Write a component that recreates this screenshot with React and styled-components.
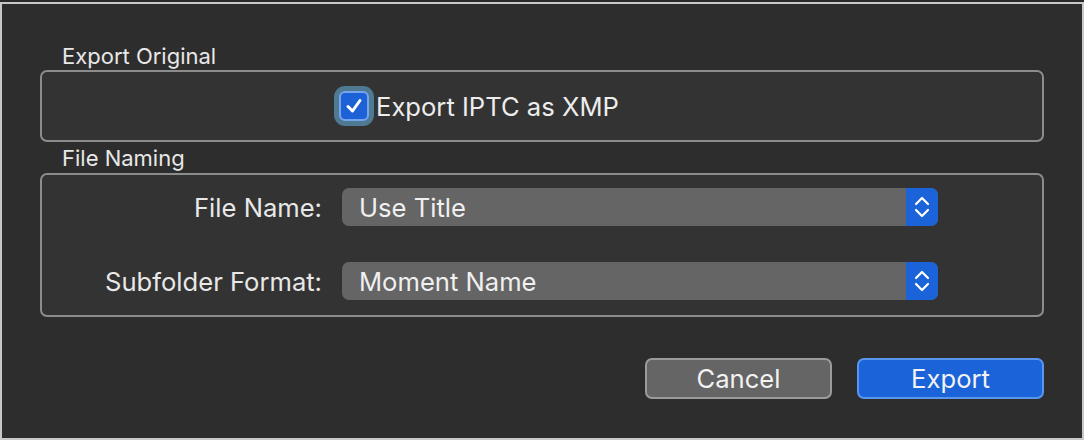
import React from 'react';
import styled, { createGlobalStyle } from 'styled-components';

const GlobalStyle = createGlobalStyle`
  html, body {
    margin: 0;
    padding: 0;
    background: #2a2a2a;
  }
  body {
    font-family: Inter, "Liberation Sans", Arial, sans-serif;
    color: #e4e4e4;
    -webkit-font-smoothing: antialiased;
  }
`

const Window = styled.div`
  box-sizing: border-box;
  margin-top: 2px;
  width: 1084px;
  height: 438px;
  border: 2px solid #c8c8c8;
  background: #2d2d2d;
  padding: 40px 38px 0 38px;
  display: flex;
  flex-direction: column;
`

const GroupLabel = styled.div`
  font-size: 22px;
  line-height: 24px;
  padding-left: 22px;
  margin-bottom: ${p => p.gap}px;
  color: #e8e8e8;
`

const GroupBox = styled.div`
  box-sizing: border-box;
  border: 2px solid #8c8c8c;
  border-radius: 7px;
  background: #333333;
  margin-bottom: ${p => p.after || 0}px;
`

const CheckRow = styled.label`
  display: flex;
  align-items: center;
  height: 68px;
  padding-left: 297px;
  gap: 7px;
  font-size: 25.6px;
  color: #ededed;
`

const CheckBox = styled.span`
  box-sizing: border-box;
  width: 30px;
  height: 30px;
  border-radius: 6px;
  background: #1c62d6;
  border: 2px solid #78a4ec;
  box-shadow: 0 0 0 5px #4e7a94;
  display: flex;
  align-items: center;
  justify-content: center;
`

const FormGrid = styled.div`
  display: grid;
  grid-template-columns: 280px 596px;
  column-gap: 20px;
  row-gap: 36px;
  align-items: center;
  padding: 13px 0 15px 0;
`

const FieldLabel = styled.div`
  text-align: right;
  font-size: 25.6px;
  color: #e8e8e8;
`

const Popup = styled.div`
  height: 38px;
  border-radius: 7px;
  background: #656565;
  display: flex;
  align-items: center;
  overflow: hidden;
`

const PopupText = styled.span`
  flex: 1;
  padding-left: 17px;
  font-size: 25.6px;
  color: #f0f0f0;
`

const Stepper = styled.span`
  width: 32px;
  height: 100%;
  background: #1b63d9;
  display: flex;
  align-items: center;
  justify-content: center;
`

const ButtonRow = styled.div`
  display: flex;
  justify-content: flex-end;
  gap: 25px;
`

const Button = styled.button`
  box-sizing: border-box;
  width: 187px;
  height: 41px;
  border-radius: 7px;
  border: 2px solid ${p => (p.primary ? '#5a95ee' : '#9b9b9b')};
  background: ${p => (p.primary ? '#1a63d8' : '#656565')};
  color: #f2f2f2;
  font-family: inherit;
  font-size: 25.6px;
  padding: 0;
`

const Chevrons = () => (
  <svg width="18" height="24" viewBox="0 0 18 24" fill="none" stroke="#fff" strokeWidth="2.2" strokeLinecap="round" strokeLinejoin="round">
    <path d="M3 9 L9 3 L15 9" />
    <path d="M3 15 L9 21 L15 15" />
  </svg>
)

const Select = ({ value }) => (
  <Popup>
    <PopupText>{value}</PopupText>
    <Stepper><Chevrons /></Stepper>
  </Popup>
)

export default function App() {
  return (
    <>
      <GlobalStyle />
      <Window>
        <GroupLabel gap={2}>Export Original</GroupLabel>
        <GroupBox after={4}>
          <CheckRow>
            <CheckBox>
              <svg width="20" height="20" viewBox="0 0 20 20" fill="none" stroke="#fff" strokeWidth="3" strokeLinecap="round" strokeLinejoin="round">
                <path d="M4 10.5 L8.5 15 L16 4.5" />
              </svg>
            </CheckBox>
            Export IPTC as XMP
          </CheckRow>
        </GroupBox>
        <GroupLabel gap={3}>File Naming</GroupLabel>
        <GroupBox after={41}>
          <FormGrid>
            <FieldLabel>File Name:</FieldLabel>
            <Select value="Use Title" />
            <FieldLabel>Subfolder Format:</FieldLabel>
            <Select value="Moment Name" />
          </FormGrid>
        </GroupBox>
        <ButtonRow>
          <Button>Cancel</Button>
          <Button primary>Export</Button>
        </ButtonRow>
      </Window>
    </>
  );
}
